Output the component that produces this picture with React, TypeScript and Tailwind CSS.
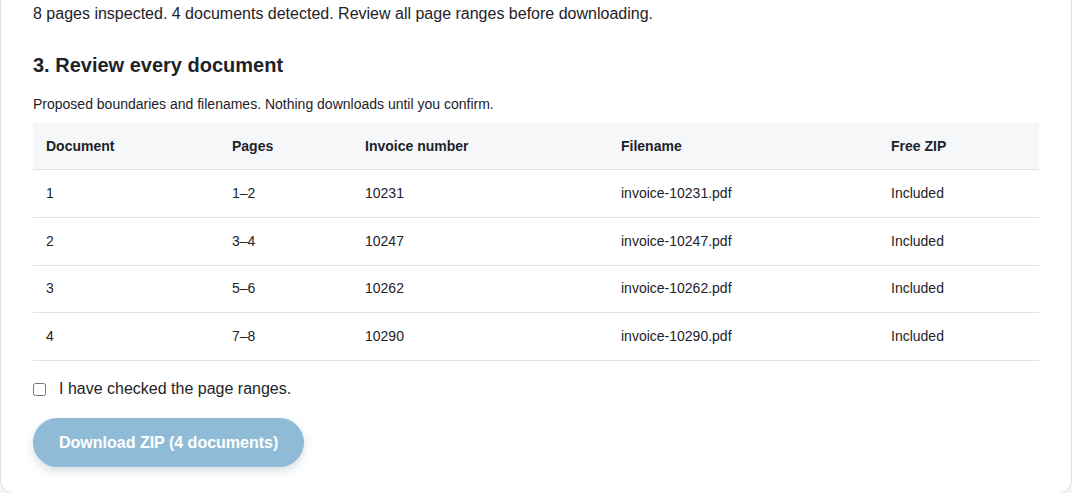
import { useState } from 'react';

const DOCS = [
  { id: 1, pages: '1–2', invoice: '10231' },
  { id: 2, pages: '3–4', invoice: '10247' },
  { id: 3, pages: '5–6', invoice: '10262' },
  { id: 4, pages: '7–8', invoice: '10290' },
];

const COLS = ['Document', 'Pages', 'Invoice number', 'Filename', 'Free ZIP'];
const WIDTHS = ['w-[186px]', 'w-[133px]', 'w-[256px]', 'w-[270px]', ''];

export default function App() {
  const [checked, setChecked] = useState(false);

  return (
    <div className="min-h-screen bg-[#f3f5f7] font-['Liberation_Sans',Arial,sans-serif] text-[#1d2329]">
      <section className="rounded-b-[14px] border-x border-b border-[#dbe2e8] bg-white px-[32px] pt-[2px] pb-[26px]">
        <p className="text-[16px] leading-[24px]">
          8 pages inspected. 4 documents detected. Review all page ranges before downloading.
        </p>

        <h2 className="mt-[25px] text-[20px] font-bold leading-[28px]">3. Review every document</h2>
        <p className="mt-[15px] text-[14px] leading-[20px]">
          Proposed boundaries and filenames. Nothing downloads until you confirm.
        </p>

        <table className="mt-[9px] w-full border-collapse text-left text-[14px] leading-[21px]">
          <thead>
            <tr className="border-b border-[#dfe4e9] bg-[#f6f7f9]">
              {COLS.map((c, i) => (
                <th key={c} className={`${WIDTHS[i]} px-[13px] py-[12.5px] font-bold`}>
                  {c}
                </th>
              ))}
            </tr>
          </thead>
          <tbody>
            {DOCS.map((d) => (
              <tr key={d.id} className="border-b border-[#dfe4e9]">
                <td className="px-[13px] py-[12.875px]">{d.id}</td>
                <td className="px-[13px] py-[12.875px]">{d.pages}</td>
                <td className="px-[13px] py-[12.875px]">{d.invoice}</td>
                <td className="px-[13px] py-[12.875px]">invoice-{d.invoice}.pdf</td>
                <td className="px-[13px] py-[12.875px]">Included</td>
              </tr>
            ))}
          </tbody>
        </table>

        <label className="mt-[16px] flex items-center gap-[13px] text-[16px] leading-[24px]">
          <input
            type="checkbox"
            checked={checked}
            onChange={(e) => setChecked(e.target.checked)}
            className="m-0 h-[13px] w-[13px]"
          />
          I have checked the page ranges.
        </label>

        <button
          disabled={!checked}
          className="mt-[17px] h-[49px] rounded-full bg-[#8fbbd6] px-[26px] text-[16px] font-bold text-white shadow-[0_4px_10px_rgba(30,70,100,0.18)]"
        >
          Download ZIP (4 documents)
        </button>
      </section>
    </div>
  );
}
